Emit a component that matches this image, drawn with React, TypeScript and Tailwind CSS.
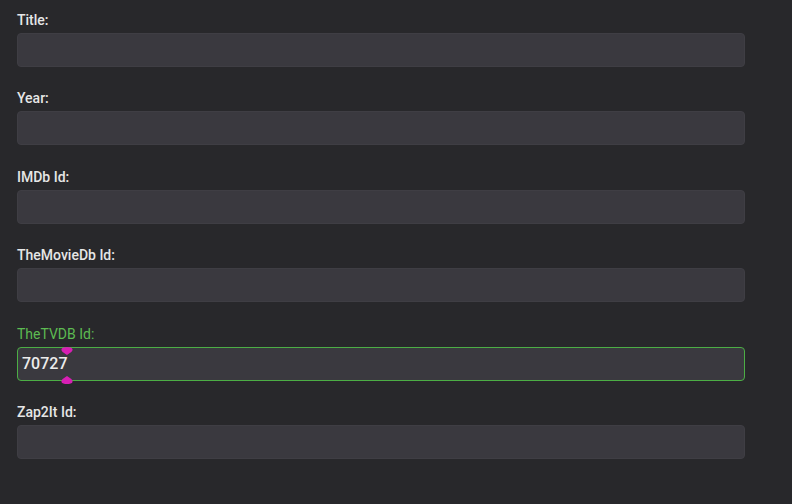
const fields = [
  { label: 'Title:', value: '' },
  { label: 'Year:', value: '' },
  { label: 'IMDb Id:', value: '' },
  { label: 'TheMovieDb Id:', value: '' },
  { label: 'TheTVDB Id:', value: '70727', focused: true },
  { label: 'Zap2It Id:', value: '' },
];

const Handle = ({ up }: { up?: boolean }) => (
  <svg
    width="12"
    height="9"
    viewBox="0 0 12 9"
    className={up ? 'absolute left-[43px] -top-[2px]' : 'absolute left-[43px] -bottom-[5px]'}
  >
    {up ? (
      <path d="M6 9 C3 6.5 0 6 0.5 3 C1 0.3 11 0.3 11.5 3 C12 6 9 6.5 6 9 Z" fill="#d81fb4" />
    ) : (
      <path d="M6 0 C3 2.5 0 3 0.5 6 C1 8.7 11 8.7 11.5 6 C12 3 9 2.5 6 0 Z" fill="#d81fb4" />
    )}
  </svg>
);

export default function App() {
  return (
    <div
      className="w-[792px] h-[504px] bg-[#28282b] pl-[17px] pt-[9px]"
      style={{ fontFamily: 'Roboto, "Noto Sans", sans-serif' }}
    >
      {fields.map((f) => (
        <div key={f.label} className="w-[728px] mb-[20.4px]">
          <div
            className={
              f.focused
                ? 'h-[20px] mb-[4px] text-[14px] leading-[22px] text-[#5dbb52]'
                : 'h-[20px] mb-[4px] text-[14px] leading-[22px] font-medium text-[#e6e6e6]'
            }
          >
            {f.label}
          </div>
          <div
            className={
              f.focused
                ? 'relative h-[34px] rounded-[4px] bg-[#3a393f] border border-[#4cae45] flex items-center px-[4px]'
                : 'relative h-[34px] rounded-[4px] bg-[#3a393f] border border-[#3f3e44] flex items-center px-[4px]'
            }
          >
            {f.value && (
              <span className="text-[16px] font-medium text-[#ececec] leading-none">{f.value}</span>
            )}
            {f.focused && (
              <>
                <Handle up />
                <Handle />
              </>
            )}
          </div>
        </div>
      ))}
    </div>
  );
}
